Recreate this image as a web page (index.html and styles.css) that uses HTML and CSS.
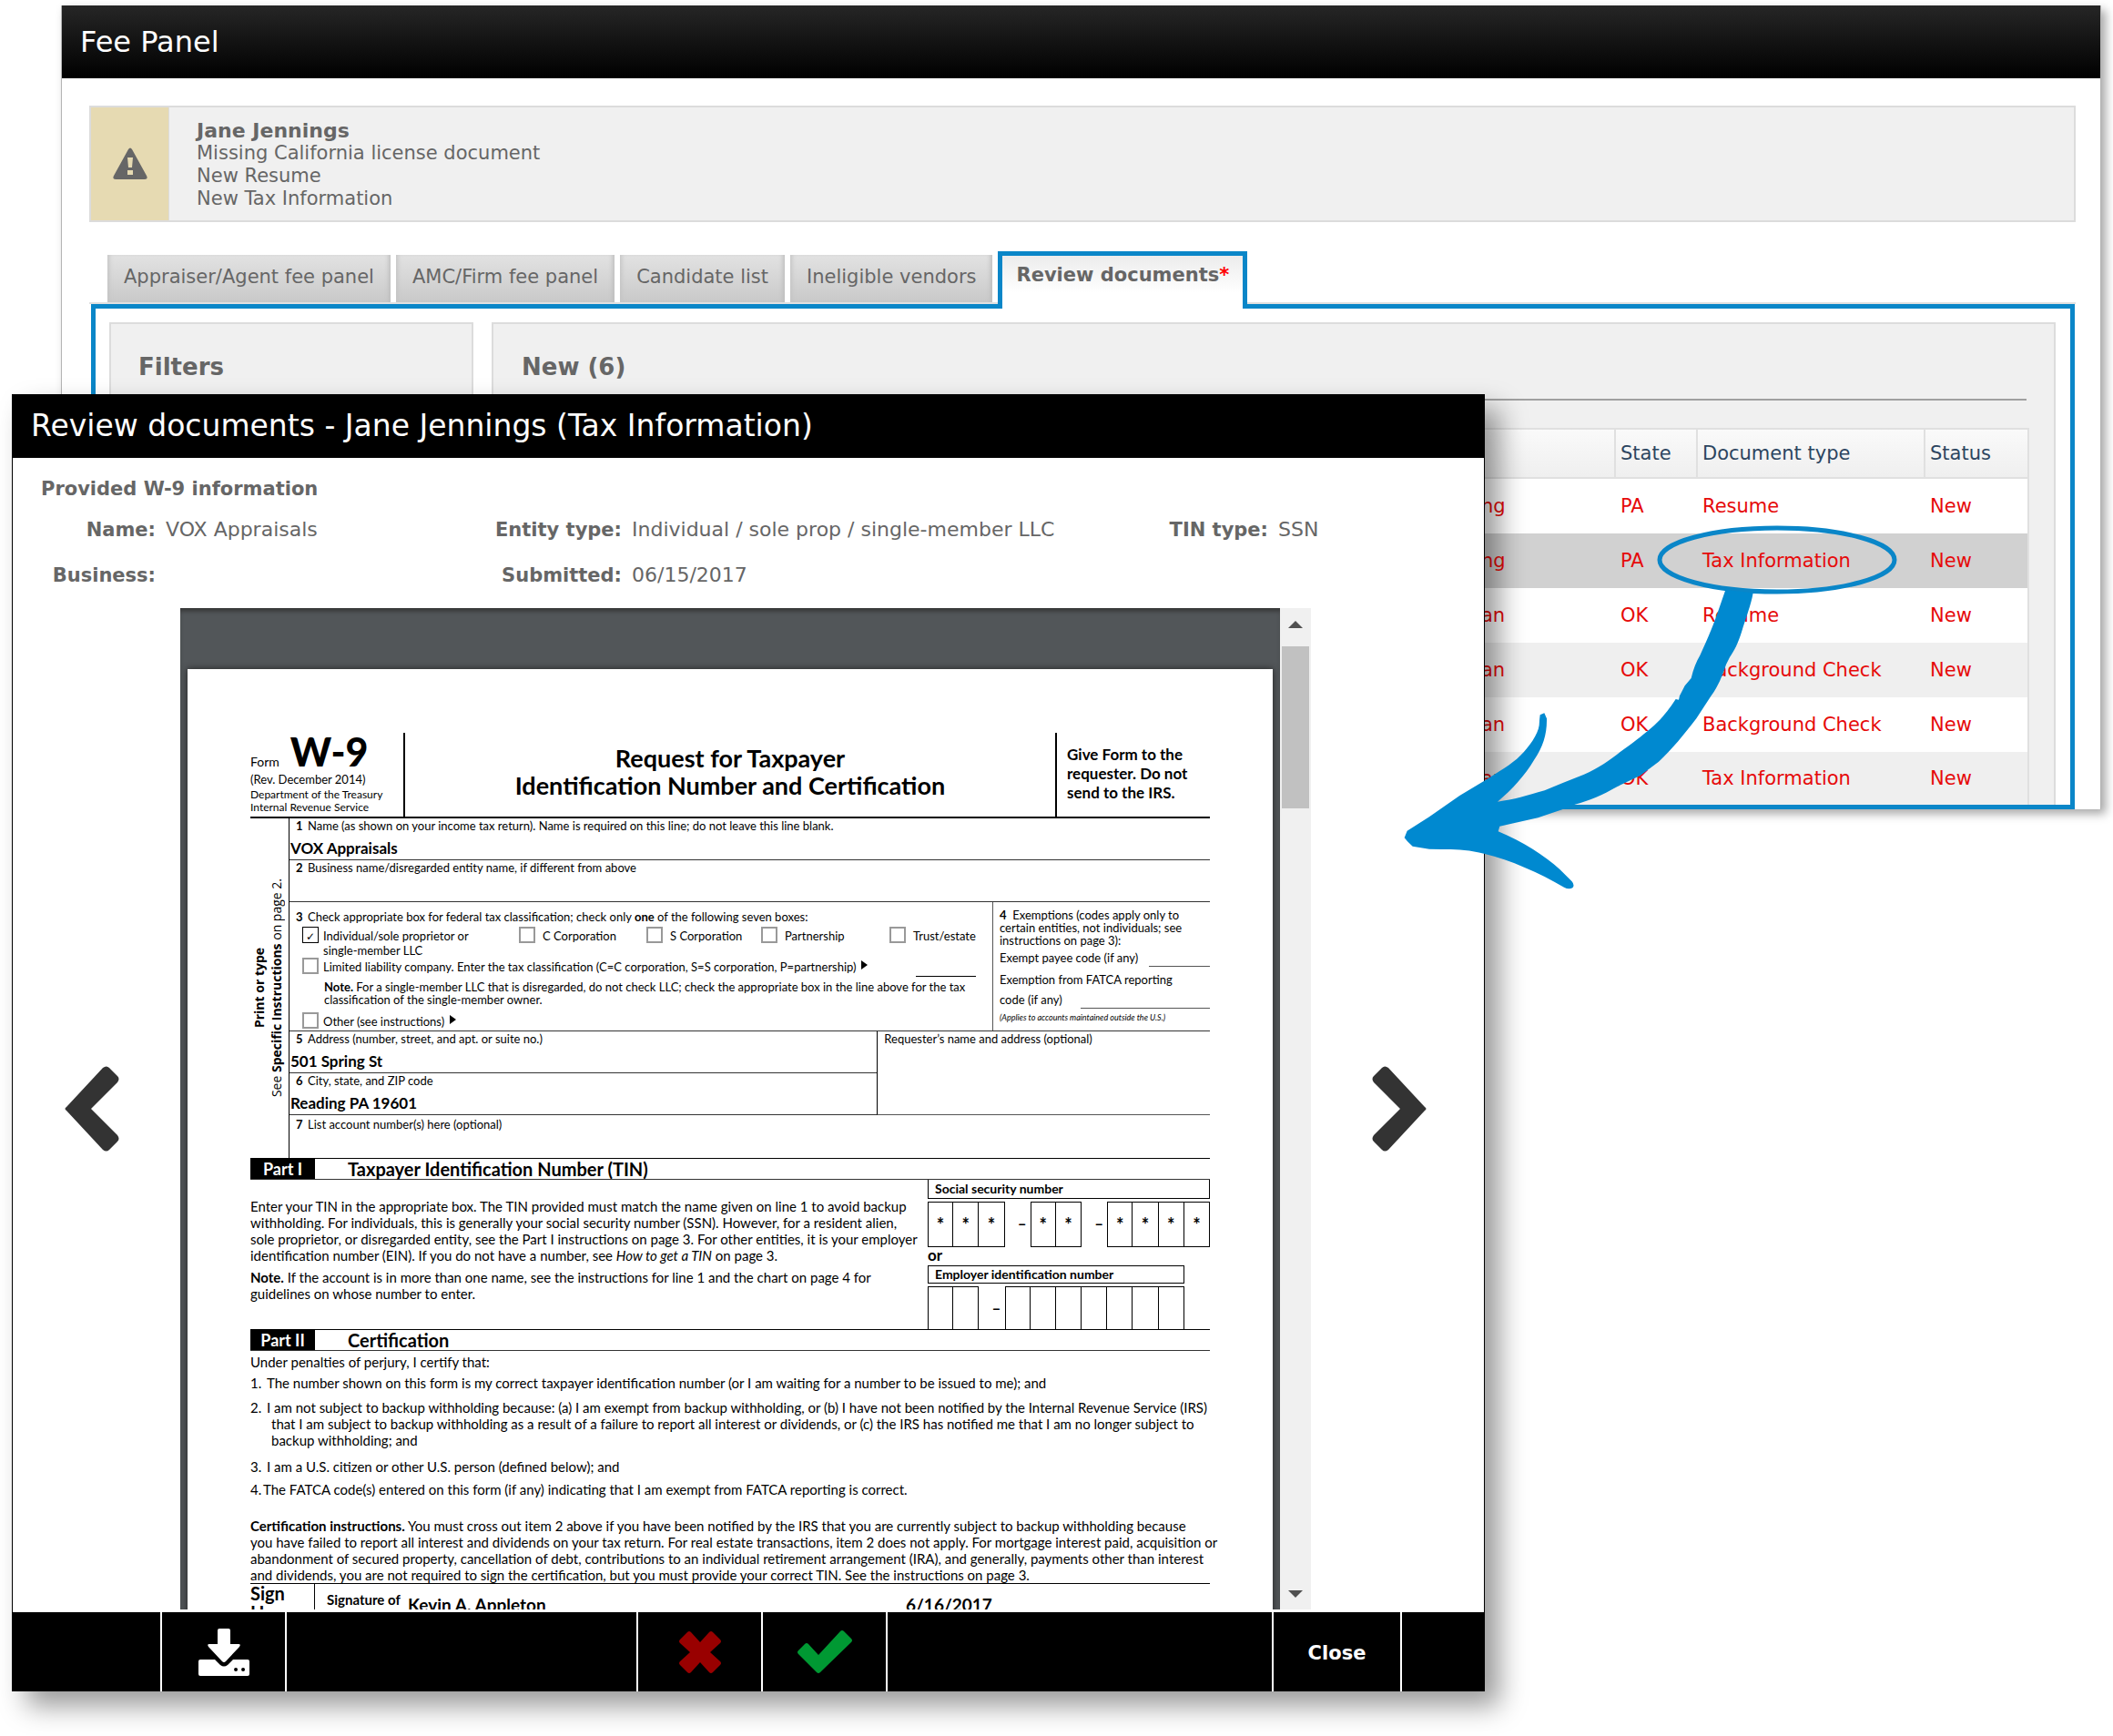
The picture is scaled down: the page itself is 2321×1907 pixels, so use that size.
FILE: index.html
```html
<!DOCTYPE html>
<html lang="en">
<head>
<meta charset="utf-8">
<title>Fee Panel</title>
<link rel="stylesheet" href="styles.css">
</head>
<body>
<div class="desktop">
  <main class="window">
    <header class="window-title"><h1>Fee Panel</h1></header>
    <div class="window-body">
      <section class="alert">
        <div class="alert-icon">
          <svg width="38" height="36" viewBox="0 0 38 36" aria-hidden="true"><path fill="#666" fill-rule="evenodd" d="M17 2q2-3 4 0l16 29q2 4-2 4H3q-4 0-2-4zM16 11l1 11h4l1-11zM16 25v5h6v-5z"/></svg>
        </div>
        <div class="alert-text"><strong>Jane Jennings</strong>Missing California license document<br>New Resume<br>New Tax Information</div>
      </section>

      <nav class="tabs">
        <button class="tab">Appraiser/Agent fee panel</button>
        <button class="tab">AMC/Firm fee panel</button>
        <button class="tab">Candidate list</button>
        <button class="tab">Ineligible vendors</button>
        <button class="tab tab-active">Review documents<span class="star">*</span></button>
      </nav>

      <div class="tab-panel">
        <section class="card"><h2>Filters</h2></section>
        <section class="card card-list">
          <h2 class="ruled">New (6)</h2>
          <table class="docs">
            <colgroup><col><col class="c-name"><col class="c-state"><col class="c-type"><col class="c-status"></colgroup>
            <thead><tr><th></th><th class="plain"></th><th>State</th><th>Document type</th><th>Status</th></tr></thead>
            <tbody>
              <tr><td></td><td>ng</td><td>PA</td><td>Resume</td><td>New</td></tr>
              <tr class="selected"><td></td><td>ng</td><td>PA</td><td>Tax Information</td><td>New</td></tr>
              <tr><td></td><td>an</td><td>OK</td><td>Resume</td><td>New</td></tr>
              <tr><td></td><td>an</td><td>OK</td><td>Background Check</td><td>New</td></tr>
              <tr><td></td><td>an</td><td>OK</td><td>Background Check</td><td>New</td></tr>
              <tr><td></td><td>an</td><td>OK</td><td>Tax Information</td><td>New</td></tr>
            </tbody>
          </table>
        </section>
      </div>
    </div>
  </main>

  <section class="dialog" role="dialog" aria-labelledby="dialog-title">
    <h2 class="dialog-title" id="dialog-title">Review documents - Jane Jennings (Tax Information)</h2>
    <div class="info">
      <h3>Provided W-9 information</h3>
      <dl>
        <dt>Name:</dt><dd>VOX Appraisals</dd>
        <dt>Entity type:</dt><dd>Individual / sole prop / single-member LLC</dd>
        <dt>TIN type:</dt><dd>SSN</dd>
        <dt>Business:</dt><dd></dd>
        <dt>Submitted:</dt><dd>06/15/2017</dd>
      </dl>
    </div>

    <div class="browse">
      <button class="turn turn-prev" aria-label="Previous document">
        <svg width="60" height="94" viewBox="0 0 60 94" aria-hidden="true"><path fill="#333" d="M42 2q4-3 7 0l9 9q3 3 0 7L29 47l29 29q3 4 0 7l-9 9q-3 3-7 0L2 49q-3-2 0-4z"/></svg>
      </button>
      <div class="viewer">
        <div class="viewport">
          <article class="sheet">
            <header class="form-head">
              <div class="form-id">
                <div class="form-no">Form <b>W-9</b></div>
                <div class="rev">(Rev. December 2014)</div>
                <div class="dept">Department of the Treasury<br>Internal Revenue Service</div>
              </div>
              <h4>Request for Taxpayer<br>Identification Number and Certification</h4>
              <div class="give">Give Form to the<br>requester. Do not<br>send to the IRS.</div>
            </header>

            <div class="form-main">
              <div class="side"><div class="side-text"><b>Print or type</b><span>See <b>Specific Instructions</b> on page 2.</span></div></div>
              <div class="fields">
                <div class="field">
                  <div class="cap"><b>1</b>Name (as shown on your income tax return). Name is required on this line; do not leave this line blank.</div>
                  <div class="val">VOX Appraisals</div>
                </div>
                <div class="field">
                  <div class="cap"><b>2</b>Business name/disregarded entity name, if different from above</div>
                  <div class="val"></div>
                </div>
                <div class="class-row">
                  <div class="classes">
                    <div class="cap"><b>3</b>Check appropriate box for federal tax classification; check only <strong>one</strong> of the following seven boxes:</div>
                    <div class="options">
                      <label class="opt tight"><input type="checkbox" checked><span>Individual/sole proprietor or<br>single-member LLC</span></label>
                      <label class="opt"><input type="checkbox"><span>C Corporation</span></label>
                      <label class="opt"><input type="checkbox"><span>S Corporation</span></label>
                      <label class="opt"><input type="checkbox"><span>Partnership</span></label>
                      <label class="opt"><input type="checkbox"><span>Trust/estate</span></label>
                    </div>
                    <div class="llc">
                      <label class="opt tight"><input type="checkbox"><span>Limited liability company. Enter the tax classification (C=C corporation, S=S corporation, P=partnership)</span></label><i class="tri"></i><i class="blank"></i>
                    </div>
                    <p class="class-note"><b>Note.</b> For a single-member LLC that is disregarded, do not check LLC; check the appropriate box in the line above for the tax<br>classification of the single-member owner.</p>
                    <div class="llc">
                      <label class="opt tight"><input type="checkbox"><span>Other (see instructions)</span></label><i class="tri"></i>
                    </div>
                  </div>
                  <div class="exempt">
                    <p><b>4</b>&nbsp; Exemptions (codes apply only to<br>certain entities, not individuals; see<br>instructions on page 3):</p>
                    <div class="code">Exempt payee code (if any)<i></i></div>
                    <div class="code fatca">Exemption from FATCA reporting</div>
                    <div class="code second">code (if any)<i></i></div>
                    <div class="applies">(Applies to accounts maintained outside the U.S.)</div>
                  </div>
                </div>
                <div class="address">
                  <div class="address-left">
                    <div class="field">
                      <div class="cap"><b>5</b>Address (number, street, and apt. or suite no.)</div>
                      <div class="val">501 Spring St</div>
                    </div>
                    <div class="field">
                      <div class="cap"><b>6</b>City, state, and ZIP code</div>
                      <div class="val">Reading PA 19601</div>
                    </div>
                  </div>
                  <div class="requester">Requester’s name and address (optional)</div>
                </div>
                <div class="accounts"><div class="cap"><b>7</b>List account number(s) here (optional)</div></div>
              </div>
            </div>

            <div class="part"><b>Part I</b><h5>Taxpayer Identification Number (TIN)</h5></div>
            <div class="tin">
              <div class="tin-text">
                <p>Enter your TIN in the appropriate box. The TIN provided must match the name given on line 1 to avoid backup<br>withholding. For individuals, this is generally your social security number (SSN). However, for a resident alien,<br>sole proprietor, or disregarded entity, see the Part I instructions on page 3. For other entities, it is your employer<br>identification number (EIN). If you do not have a number, see <em>How to get a TIN</em> on page 3.</p>
                <p><b>Note.</b> If the account is in more than one name, see the instructions for line 1 and the chart on page 4 for<br>guidelines on whose number to enter.</p>
              </div>
              <div class="numbers">
                <div class="num-label first">Social security number</div>
                <div class="digits"><span>*</span><span>*</span><span>*</span><i>–</i><span>*</span><span>*</span><i>–</i><span>*</span><span>*</span><span>*</span><span>*</span></div>
                <div class="or">or</div>
                <div class="num-label ein">Employer identification number</div>
                <div class="digits last"><span></span><span></span><i>–</i><span></span><span></span><span></span><span></span><span></span><span></span><span></span></div>
              </div>
            </div>

            <div class="part"><b>Part II</b><h5>Certification</h5></div>
            <div class="certify">
              <p>Under penalties of perjury, I certify that:</p>
              <div class="item one"><span>1.</span><p>The number shown on this form is my correct taxpayer identification number (or I am waiting for a number to be issued to me); and</p></div>
              <div class="item two"><span>2.</span><p>I am not subject to backup withholding because: (a) I am exempt from backup withholding, or (b) I have not been notified by the Internal Revenue Service (IRS)<br>that I am subject to backup withholding as a result of a failure to report all interest or dividends, or (c) the IRS has notified me that I am no longer subject to<br>backup withholding; and</p></div>
              <div class="item three"><span>3.</span><p>I am a U.S. citizen or other U.S. person (defined below); and</p></div>
              <div class="item four"><span>4.</span><p>The FATCA code(s) entered on this form (if any) indicating that I am exempt from FATCA reporting is correct.</p></div>
              <p class="instructions"><b>Certification instructions.</b> You must cross out item 2 above if you have been notified by the IRS that you are currently subject to backup withholding because<br>you have failed to report all interest and dividends on your tax return. For real estate transactions, item 2 does not apply. For mortgage interest paid, acquisition or<br>abandonment of secured property, cancellation of debt, contributions to an individual retirement arrangement (IRA), and generally, payments other than interest<br>and dividends, you are not required to sign the certification, but you must provide your correct TIN. See the instructions on page 3.</p>
            </div>
            <div class="sign">
              <div class="sign-here">Sign<br>Here</div>
              <div class="sign-of">Signature of</div>
              <div class="sign-val">Kevin A. Appleton</div>
              <div class="sign-val">6/16/2017</div>
            </div>
          </article>
        </div>
        <div class="scrollbar" aria-hidden="true"><i class="up"></i><i class="thumb"></i><i class="down"></i></div>
      </div>
      <button class="turn turn-next" aria-label="Next document">
        <svg width="60" height="94" viewBox="0 0 60 94" aria-hidden="true"><path fill="#333" d="M18 2q-4-3-7 0l-9 9q-3 3 0 7l29 29L2 76q-3 4 0 7l9 9q3 3 7 0l40-43q3-2 0-4z"/></svg>
      </button>
    </div>

    <footer class="actions">
      <span></span>
      <button aria-label="Download">
        <svg width="58" height="54" viewBox="0 0 58 54" aria-hidden="true"><path fill="#fff" d="M24 1h10q2 0 2 2v15h9q3 0 1 3L31 37q-2 2-4 0L12 21q-2-3 1-3h9V3q0-2 2-2z"/><path fill="#fff" fill-rule="evenodd" d="M3 35h16l6 6q4 3 8 0l6-6h16q2 0 2 2v14q0 2-2 2H3q-2 0-2-2V37q0-2 2-2zM42 44a2 2 0 1 0 .1 4a2 2 0 1 0-.1-4zM50 44a2 2 0 1 0 .1 4a2 2 0 1 0-.1-4z"/></svg>
      </button>
      <span></span>
      <button aria-label="Reject">
        <svg width="46" height="46" viewBox="0 0 46 46" aria-hidden="true"><path fill="#900" d="M9 1q2-2 4 0l10 11L33 1q2-2 4 0l8 8q2 2 0 4L34 23l11 10q2 2 0 4l-8 8q-2 2-4 0L23 34 13 45q-2 2-4 0l-8-8q-2-2 0-4l11-10L1 13q-2-2 0-4z"/></svg>
      </button>
      <button aria-label="Approve">
        <svg width="60" height="48" viewBox="0 0 60 48" aria-hidden="true"><path fill="#093" d="M47 1q2-2 4 0l8 8q2 2 0 4L25 46q-2 2-4 0L1 26q-2-2 0-4l7-7q2-2 4 0l11 12z"/></svg>
      </button>
      <span></span>
      <button class="close">Close</button>
      <span></span>
    </footer>
  </section>

  <svg class="callout" width="560" height="430" viewBox="0 0 560 430" aria-hidden="true">
    <ellipse cx="422" cy="45" rx="129" ry="35" fill="none" stroke="#0a86c8" stroke-width="5"/>
    <g transform="translate(0 70) scale(.33333)">
      <path fill="#0089d0" d="M1096 24L1187 34C1180 75 1162 120 1150 160C1138 200 1125 225 1110 246L1098 270C1085 310 1070 345 1046 377L1000 448C960 500 920 550 876 590L815 636L740 672C690 700 650 718 600 731L558 748L478 775L388 795L352 803L347 820C430 855 500 900 550 945L590 985Q600 997 592 1006Q580 1013 564 1004C480 955 390 915 300 893C250 880 200 878 160 879L120 878L65 869L48 853L38 841L47 818L120 772L220 702L300 654C350 622 390 600 420 570C450 540 478 500 482 470Q483 450 485 436L499 430L507 448C508 500 495 540 465 585C435 635 395 680 345 722C400 715 440 702 500 685L560 660L630 632C680 610 715 585 750 557C790 530 820 505 850 480C880 455 900 430 918 405L932 384L942 386L945 373L962 340L983 315C990 285 1000 260 1012 240C1040 180 1060 130 1075 85Z"/>
    </g>
  </svg>
</div>
</body>
</html>
```
FILE: styles.css
```css
* { box-sizing: border-box; }

body {
  margin: 0;
  background: #fff;
  color: #666;
  font: 21px/25px "DejaVu Sans", sans-serif;
}

h1, h2, h3, h4, h5, p, dl, dd { margin: 0; }

button {
  margin: 0;
  padding: 0;
  border: 0;
  background: none;
  color: inherit;
  font: inherit;
}

i { font-style: normal; }

.desktop {
  position: relative;
  min-height: 100vh;
  padding: 6px 13px 0 67px;
}

/* Fee panel window */
.window {
  border: 1px solid #b4b4b4;
  border-top: 0;
  border-bottom: 0;
  background: #fff;
  box-shadow: 5px 5px 10px rgba(0, 0, 0, .35);
}

.window-title {
  padding: 0 20px;
  background: linear-gradient(#262626, #000);
  color: #fff;
}

.window-title h1 {
  font-size: 32px;
  font-weight: normal;
  line-height: 80px;
}

.window-body { padding: 30px 27px 0 30px; }

.alert {
  display: flex;
  border: 2px solid #dcdcdc;
  background: #f0f0f0;
}

.alert-icon {
  display: flex;
  align-items: center;
  justify-content: center;
  width: 86px;
  border-right: 1px solid #dcdcdc;
  background: #e6dab2;
}

.alert-text { padding: 13px 30px 11px; }

.alert-text strong {
  display: block;
  font-size: 22px;
}

.tabs {
  display: flex;
  align-items: flex-end;
  gap: 6px;
  margin-top: 32px;
  padding-left: 20px;
  border-bottom: 2px solid #e0e0e0;
}

.tab {
  padding: 0 18px 4px;
  background: linear-gradient(#e2e2e2, #c9c9c9);
  box-shadow: inset 5px 0 5px -3px #c4c4c4, inset -5px 0 5px -3px #bdbdbd;
  line-height: 48px;
  white-space: nowrap;
}

.tab-active {
  position: relative;
  margin-bottom: -7px;
  padding: 0 15px 16px;
  border: 5px solid #0a86c8;
  border-bottom: 0;
  background: linear-gradient(#ececec, #fff 70%);
  box-shadow: none;
  font-weight: bold;
  line-height: 42px;
}

.star { color: #f00; }

.tab-panel {
  display: grid;
  grid-template-columns: 400px 1fr;
  gap: 20px;
  margin: 0 1px 0 2px;
  padding: 15px 16px 0 15px;
  border: 5px solid #0a86c8;
}

.card {
  padding: 0 30px;
  border: 2px solid #dcdcdc;
  border-bottom: 0;
  background: #f0f0f0;
}

.card-list { padding: 0 27px 0 31px; }

.card h2 {
  padding-top: 12px;
  font-size: 26px;
  line-height: 70px;
}

.card .ruled {
  margin: 0 3px 30px 0;
  border-bottom: 2px solid #a0a0a0;
}

.docs {
  width: 100%;
  table-layout: fixed;
  border: 2px solid #e0e0e0;
  border-bottom: 0;
  border-collapse: separate;
  border-spacing: 0;
}

.c-name { width: 153px; }
.c-state { width: 90px; }
.c-type { width: 250px; }
.c-status { width: 114px; }

.docs th {
  height: 54px;
  padding: 0 5px;
  border-left: 2px solid #e0e0e0;
  border-bottom: 2px solid #e0e0e0;
  background: linear-gradient(#fafafa, #efefef);
  color: #2c4560;
  font-weight: normal;
  text-align: left;
}

.docs th:first-child, .docs .plain { border-left: 0; }

.docs td {
  height: 60px;
  padding: 0 7px;
  background: #fff;
  color: #e60a0a;
  white-space: nowrap;
}

.docs tr:nth-child(even) td { background: #efefef; }
.docs .selected td { background: #d1d1d1 !important; }
.docs tr:last-child td { height: 58px; }

/* Review dialog */
.dialog {
  position: absolute;
  top: 433px;
  left: 13px;
  right: 690px;
  border: 1px solid #000;
  border-top: 0;
  border-bottom: 0;
  background: #fff;
  box-shadow: 16px 16px 28px rgba(0, 0, 0, .4);
}

.dialog-title {
  padding: 0 20px;
  background: #000;
  color: #fff;
  font-size: 33px;
  font-weight: normal;
  line-height: 70px;
}

.info { padding: 19px 0 11px; }

.info h3 {
  padding-left: 31px;
  font-size: 21px;
  line-height: 30px;
}

.info dl {
  display: grid;
  grid-template-columns: 157px 330fr 160px 568fr 120px 226fr;
  column-gap: 11px;
  margin-top: 5px;
  line-height: 50px;
  white-space: nowrap;
}

.info dt {
  font-weight: bold;
  text-align: right;
}

.info dd { font-size: 22px; }

.browse {
  display: grid;
  grid-template-columns: 184px minmax(0, 1fr) 190px;
  padding-bottom: 3px;
}

.turn {
  display: flex;
  align-items: center;
  justify-content: center;
}

.turn-prev { padding-right: 11px; }
.turn-next { padding-left: 4px; }

.viewer {
  display: flex;
  height: 1100px;
}

.viewport {
  flex: 1;
  min-width: 0;
  overflow: hidden;
  padding: 67px 8px 0;
  background: #525659;
  box-shadow: inset 0 5px 5px -2px #333;
}

.scrollbar {
  display: flex;
  flex: none;
  flex-direction: column;
  align-items: center;
  width: 34px;
  padding: 14px 0 13px;
  background: #f0f0f0;
}

.up, .down {
  border: 8px solid transparent;
}

.up {
  border-top: 0;
  border-bottom-color: #505050;
}

.down {
  margin-top: auto;
  border-bottom: 0;
  border-top-color: #505050;
}

.thumb {
  width: 30px;
  height: 178px;
  margin-top: 20px;
  background: #c1c1c1;
}

/* W-9 form */
.sheet {
  height: 1200px;
  padding: 70px 69px 0;
  background: #fff;
  box-shadow: 0 0 7px #222;
  color: #000;
  font: 13px/18px Lato, "Open Sans", sans-serif;
  white-space: nowrap;
}

.form-head {
  display: grid;
  grid-template-columns: 170px 1fr 170px;
  height: 94px;
  border-bottom: 2px solid #000;
}

.form-id { border-right: 2px solid #000; }

.form-no {
  display: flex;
  align-items: baseline;
  gap: 12px;
  height: 41px;
  font-size: 14px;
  line-height: 20px;
}

.form-no b {
  font-size: 43px;
  font-weight: 900;
  line-height: 41px;
}

.rev { margin-top: 1px; }

.dept {
  margin-top: 1px;
  font-size: 12px;
  line-height: 14px;
}

.form-head h4 {
  padding-top: 13px;
  font-size: 27px;
  line-height: 30px;
  text-align: center;
}

.give {
  padding: 13px 0 0 11px;
  border-left: 2px solid #000;
  font-size: 17px;
  font-weight: bold;
  line-height: 21px;
}

.form-main {
  display: grid;
  grid-template-columns: 43px minmax(0, 1fr);
}

.side {
  display: flex;
  align-items: center;
  border-right: 1px solid #000;
}

.side-text {
  display: flex;
  flex-direction: column;
  width: 38px;
  font: 14px/19px "Open Sans", sans-serif;
  text-align: center;
  writing-mode: vertical-rl;
  transform: rotate(180deg);
}

.field { border-bottom: 1px solid #333; }

.cap {
  padding-left: 7px;
  line-height: 16px;
}

.cap b {
  display: inline-block;
  width: 13px;
}

.val {
  height: 29px;
  padding: 4px 0 0 1px;
  font-size: 17px;
  font-weight: bold;
  line-height: 25px;
}

.class-row {
  display: grid;
  grid-template-columns: 1fr 239px;
  border-bottom: 1px solid #333;
}

.classes { padding: 8px 0 2px; }

.options {
  display: grid;
  grid-template-columns: 238px 140px 126px 141px 1fr;
  margin-top: 3px;
  padding-left: 14px;
}

.opt {
  display: flex;
  gap: 8px;
  line-height: 16px;
}

.opt span { padding-top: 2px; }
.tight { gap: 5px; }

.opt input {
  flex: none;
  width: 18px;
  height: 18px;
  margin: 0;
  border: 2px solid #999;
  background: #fff;
  appearance: none;
}

.opt input:checked { border: 1px solid #000; }

.opt input:checked::before {
  content: "✓";
  display: block;
  color: #000;
  font: bold 12px/20px "DejaVu Sans", sans-serif;
  text-align: center;
}

.llc {
  display: flex;
  gap: 6px;
  padding-left: 14px;
}

.tri {
  height: 10px;
  margin-top: 3px;
  border: 5px solid transparent;
  border-left: 7px solid #000;
  border-right: 0;
}

.blank {
  width: 66px;
  height: 21px;
  margin: 0 18px -3px auto;
  border-bottom: 1px solid #000;
}

.class-note {
  margin: 7px 0;
  padding-left: 38px;
  line-height: 14px;
}

.exempt {
  padding: 7px 0 0 7px;
  border-left: 1px solid #555;
}

.exempt p { line-height: 14px; }

.code {
  display: flex;
  gap: 12px;
  margin-top: 2px;
  line-height: 20px;
}

.code i {
  flex: 1;
  border-bottom: 1px solid #555;
}

.fatca { margin-top: 4px; }
.second { gap: 20px; }

.applies {
  font-size: 9px;
  font-style: italic;
  line-height: 20px;
}

.address {
  display: grid;
  grid-template-columns: 646fr 366fr;
}

.requester {
  padding-left: 7px;
  border-left: 1px solid #000;
  border-bottom: 1px solid #555;
  line-height: 16px;
}

.accounts {
  height: 47px;
  padding-top: 2px;
}

.part {
  display: flex;
  height: 24px;
  border-top: 1px solid #000;
  border-bottom: 1px solid #333;
  font-size: 18px;
  line-height: 22px;
}

.part b {
  width: 71px;
  background: #000;
  color: #fff;
  text-align: center;
}

.part h5 {
  padding-left: 36px;
  font-size: 20px;
}

.tin {
  display: grid;
  grid-template-columns: minmax(0, 1fr) 310px;
}

.tin-text { font-size: 15px; }
.tin-text p:first-child { margin: 20px 0 6px; }

.num-label {
  padding-left: 7px;
  border: 1px solid #000;
  font-size: 14px;
  font-weight: bold;
  line-height: 18px;
}

.first {
  border-top: 0;
  line-height: 20px;
}

.ein { margin-right: 28px; }

.digits {
  display: grid;
  grid-template-columns: repeat(11, 1fr);
  height: 47px;
  margin-top: 3px;
  font-size: 20px;
  font-weight: bold;
  line-height: 48px;
  text-align: center;
}

.digits span {
  border: 1px solid #000;
  border-left-width: 0;
}

.digits span:first-child, .digits i + span { border-left-width: 1px; }

.digits i {
  padding-left: 10px;
  font-size: 17px;
}

.last span { border-bottom: 0; }

.or {
  font-size: 17px;
  font-weight: bold;
  line-height: 23px;
}

.certify {
  padding-top: 3px;
  font-size: 15px;
}

.item {
  display: flex;
  margin-top: 5px;
}

.item span { width: 23px; }
.item p { text-indent: -5px; }
.two { margin-top: 9px; }
.three { margin-top: 11px; }
.four { margin-top: 7px; }
.four span { width: 19px; }
.instructions { margin-top: 22px; }

.sign {
  display: grid;
  grid-template-columns: 71px 102px 547px 1fr;
  height: 60px;
  border-top: 1px solid #000;
  font-weight: bold;
}

.sign-here {
  border-right: 1px solid #000;
  font-size: 20px;
  line-height: 21px;
}

.sign-of {
  padding-left: 13px;
  font-size: 15px;
  line-height: 34px;
}

.sign-val {
  font-size: 19px;
  line-height: 46px;
}

/* Dialog buttons */
.actions {
  display: grid;
  grid-template-columns: 164px 137px 386px 137px 137px 1fr 141px 90px;
  height: 87px;
  background: #000;
  color: #fff;
}

.actions > * {
  display: flex;
  align-items: center;
  justify-content: center;
  border-right: 2px solid #fff;
}

.actions > :last-child { border-right: 0; }

.actions .close {
  padding-top: 3px;
  font-weight: bold;
}

/* Hand-drawn arrow and ring over both windows */
.callout {
  position: absolute;
  top: 570px;
  right: 231px;
}
```
